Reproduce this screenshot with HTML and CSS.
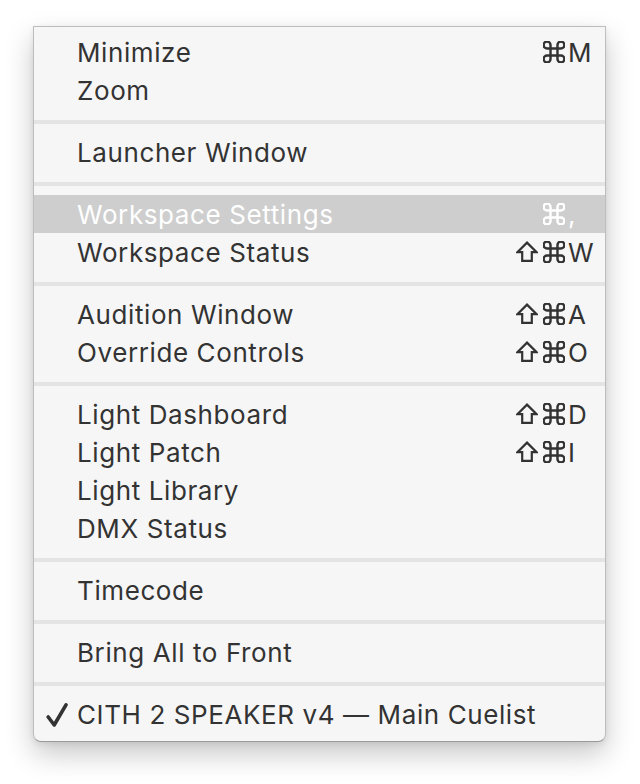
FILE: index.html
```html
<!DOCTYPE html>
<html>
<head>
<meta charset="utf-8">
<link rel="stylesheet" href="styles.css">
</head>
<body>
<svg width="0" height="0" class="defs">
  <defs>
    <symbol id="cmd" viewBox="2.5 2.5 19 19">
      <path d="M15 6v12a3 3 0 1 0 3-3H6a3 3 0 1 0 3 3V6a3 3 0 1 0-3 3h12a3 3 0 1 0-3-3z" fill="none" stroke="currentColor" stroke-width="2.1"/>
    </symbol>
    <symbol id="shift" viewBox="0 0 22 21">
      <path d="M11 1.6L20.6 11.2H15.8V19.8H6.2V11.2H1.4Z" fill="none" stroke="currentColor" stroke-width="2.2" stroke-linejoin="miter"/>
    </symbol>
  </defs>
</svg>
<div class="menu">
  <div class="item"><span class="check"></span><span class="label">Minimize</span><span class="mods"><svg class="i-cmd"><use href="#cmd"/></svg></span><span class="key">M</span></div>
  <div class="item"><span class="check"></span><span class="label">Zoom</span><span class="mods"></span><span class="key"></span></div>
  <div class="sep"></div>
  <div class="item"><span class="check"></span><span class="label">Launcher Window</span><span class="mods"></span><span class="key"></span></div>
  <div class="sep"></div>
  <div class="item active"><span class="check"></span><span class="label">Workspace Settings</span><span class="mods"><svg class="i-cmd"><use href="#cmd"/></svg></span><span class="key">,</span></div>
  <div class="item"><span class="check"></span><span class="label">Workspace Status</span><span class="mods"><svg class="i-shift"><use href="#shift"/></svg><svg class="i-cmd"><use href="#cmd"/></svg></span><span class="key">W</span></div>
  <div class="sep"></div>
  <div class="item"><span class="check"></span><span class="label">Audition Window</span><span class="mods"><svg class="i-shift"><use href="#shift"/></svg><svg class="i-cmd"><use href="#cmd"/></svg></span><span class="key">A</span></div>
  <div class="item"><span class="check"></span><span class="label">Override Controls</span><span class="mods"><svg class="i-shift"><use href="#shift"/></svg><svg class="i-cmd"><use href="#cmd"/></svg></span><span class="key">O</span></div>
  <div class="sep"></div>
  <div class="item"><span class="check"></span><span class="label">Light Dashboard</span><span class="mods"><svg class="i-shift"><use href="#shift"/></svg><svg class="i-cmd"><use href="#cmd"/></svg></span><span class="key">D</span></div>
  <div class="item"><span class="check"></span><span class="label">Light Patch</span><span class="mods"><svg class="i-shift"><use href="#shift"/></svg><svg class="i-cmd"><use href="#cmd"/></svg></span><span class="key">I</span></div>
  <div class="item"><span class="check"></span><span class="label">Light Library</span><span class="mods"></span><span class="key"></span></div>
  <div class="item"><span class="check"></span><span class="label">DMX Status</span><span class="mods"></span><span class="key"></span></div>
  <div class="sep"></div>
  <div class="item"><span class="check"></span><span class="label">Timecode</span><span class="mods"></span><span class="key"></span></div>
  <div class="sep"></div>
  <div class="item"><span class="check"></span><span class="label">Bring All to Front</span><span class="mods"></span><span class="key"></span></div>
  <div class="sep"></div>
  <div class="item"><span class="check"><svg class="i-check" viewBox="0 0 22 26"><path d="M2.2 15L8.2 23L20 2.8" fill="none" stroke="currentColor" stroke-width="3.6" stroke-linecap="round" stroke-linejoin="round"/></svg></span><span class="label">CITH 2 SPEAKER v4 — Main Cuelist</span><span class="mods"></span><span class="key"></span></div>
</div>
</body>
</html>
```
FILE: styles.css
```css
html, body {
  margin: 0;
  padding: 0;
  background: #ffffff;
}
body {
  width: 640px;
  height: 784px;
  overflow: hidden;
  font-family: "Inter", "Liberation Sans", sans-serif;
}
.defs {
  position: absolute;
  width: 0;
  height: 0;
}
.menu {
  margin: 26px 0 0 33px;
  width: 573px;
  box-sizing: border-box;
  background: #f6f6f6;
  border: 1px solid #bdbdbd;
  border-bottom-color: #9a9a9a;
  border-radius: 0 0 8px 8px;
  padding: 6px 0 8px 0;
  box-shadow: 0 12px 28px rgba(0, 0, 0, 0.22), 0 2px 6px rgba(0, 0, 0, 0.08);
}
.item {
  display: grid;
  grid-template-columns: 43px 1fr auto 30px;
  align-items: center;
  height: 38px;
  padding-right: 7px;
  color: #333333;
  font-size: 26px;
  letter-spacing: 0.6px;
}
.item.active {
  background: #cecece;
  color: #ffffff;
}
.check {
  display: flex;
  justify-content: flex-end;
  padding-right: 9px;
}
.label {
  white-space: nowrap;
}
.mods {
  display: flex;
  align-items: center;
  gap: 5px;
  padding-right: 3px;
}
.key {
  text-align: left;
  letter-spacing: 0;
}
.i-cmd {
  width: 22px;
  height: 22px;
}
.i-shift {
  width: 22px;
  height: 21px;
  margin-top: -1px;
}
.i-check {
  width: 22px;
  height: 26px;
  margin-top: 1px;
}
.sep {
  height: 4px;
  margin: 11px 0 9px 0;
  background: #e4e4e4;
}
```
